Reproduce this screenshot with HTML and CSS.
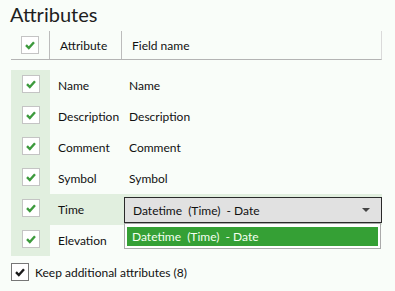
FILE: index.html
```html
<!DOCTYPE html>
<html lang="en">
<head>
    <meta charset="UTF-8">
    <title>Attributes</title>
    <link rel="stylesheet" href="styles.css">
</head>
<body>
    <h1 class="title">Attributes</h1>

    <div class="grid">
        <div class="head">
            <div class="col-check"><span class="box"><svg viewBox="0 0 12 12"><path d="M2 6.2 L4.8 9 L10 3.2" /></svg></span></div>
            <div class="col-attr">Attribute</div>
            <div class="col-field">Field name</div>
        </div>

        <div class="rows">
            <div class="row">
                <div class="col-check"><span class="box"><svg viewBox="0 0 12 12"><path d="M2 6.2 L4.8 9 L10 3.2" /></svg></span></div>
                <div class="col-attr">Name</div>
                <div class="col-field">Name</div>
            </div>
            <div class="row">
                <div class="col-check"><span class="box"><svg viewBox="0 0 12 12"><path d="M2 6.2 L4.8 9 L10 3.2" /></svg></span></div>
                <div class="col-attr">Description</div>
                <div class="col-field">Description</div>
            </div>
            <div class="row">
                <div class="col-check"><span class="box"><svg viewBox="0 0 12 12"><path d="M2 6.2 L4.8 9 L10 3.2" /></svg></span></div>
                <div class="col-attr">Comment</div>
                <div class="col-field">Comment</div>
            </div>
            <div class="row">
                <div class="col-check"><span class="box"><svg viewBox="0 0 12 12"><path d="M2 6.2 L4.8 9 L10 3.2" /></svg></span></div>
                <div class="col-attr">Symbol</div>
                <div class="col-field">Symbol</div>
            </div>
            <div class="row selected">
                <div class="col-check"><span class="box"><svg viewBox="0 0 12 12"><path d="M2 6.2 L4.8 9 L10 3.2" /></svg></span></div>
                <div class="col-attr">Time</div>
                <div class="col-field">
                    <div class="combo">
                        <span>Datetime&nbsp; (Time)&nbsp; - Date</span>
                        <span class="arrow"></span>
                    </div>
                    <div class="dropdown">
                        <div class="option">Datetime&nbsp; (Time)&nbsp; - Date</div>
                    </div>
                </div>
            </div>
            <div class="row">
                <div class="col-check"><span class="box"><svg viewBox="0 0 12 12"><path d="M2 6.2 L4.8 9 L10 3.2" /></svg></span></div>
                <div class="col-attr">Elevation</div>
                <div class="col-field"></div>
            </div>
        </div>
    </div>

    <label class="keep">
        <span class="box dark"><svg viewBox="0 0 12 12"><path d="M2 6.2 L4.8 9 L10 3.2" /></svg></span>
        Keep additional attributes (8)
    </label>
</body>
</html>
```

FILE: styles.css
```css
* {
    margin: 0;
    padding: 0;
    box-sizing: border-box;
}

body {
    background-color: #f9fdf9;
    font-family: Lato, "Noto Sans", sans-serif;
    font-size: 12px;
    color: #111;
    width: 395px;
    height: 291px;
    overflow: hidden;
}

.title {
    font-weight: normal;
    font-size: 20px;
    line-height: 28px;
    height: 31px;
    padding-left: 10px;
    color: #1e1e1e;
}

.grid {
    margin-left: 11px;
    width: 371px;
}

.head {
    display: flex;
    height: 29px;
    border-bottom: 1px solid #b4b4b4;
    border-right: 1px solid #dadada;
}

.head .col-check {
    border-right: 1px solid #bcbcbc;
}

.head .col-attr {
    width: 72px;
    padding-left: 10px;
    border-right: 1px solid #bcbcbc;
}

.head .col-field {
    padding-left: 10px;
}

.head > div {
    display: flex;
    align-items: center;
}

.rows {
    margin-top: 10px;
}

.row {
    display: flex;
    height: 31px;
    align-items: stretch;
}

.row > div {
    display: flex;
    align-items: center;
}

.row.selected {
    background-color: #e1efdf;
}

.col-check {
    width: 39px;
    justify-content: center;
}

.row .col-check {
    background-color: #e1efdf;
    align-items: flex-start !important;
    padding-top: 5px;
}

.row .col-attr {
    width: 71px;
    padding-left: 8px;
}

.row .col-field {
    flex: 1;
    padding-left: 8px;
    position: relative;
}

.box {
    display: inline-flex;
    align-items: center;
    justify-content: center;
    width: 18px;
    height: 18px;
    background: #fff;
    border: 1px solid #c4c4c4;
}

.box svg {
    width: 12px;
    height: 12px;
    fill: none;
    stroke: #3d9a3d;
    stroke-width: 2.4;
}

.box.dark {
    border-color: #767676;
}

.box.dark svg {
    stroke: #1a1a1a;
}

.combo {
    position: absolute;
    left: 3px;
    top: 3px;
    width: 258px;
    height: 26px;
    background: #e1e1e1;
    border: 1px solid #2a2a2a;
    display: flex;
    align-items: center;
    padding-left: 8px;
}

.arrow {
    position: absolute;
    right: 11px;
    top: 10px;
    border-left: 4px solid transparent;
    border-right: 4px solid transparent;
    border-top: 4px solid #444;
}

.dropdown {
    position: absolute;
    left: 3px;
    top: 29px;
    width: 257px;
    height: 26px;
    background: #fff;
    border: 1px solid #aaa;
    padding: 3px 2px 1px 2px;
    z-index: 2;
}

.option {
    background: #35a035;
    color: #f4fff0;
    height: 19px;
    line-height: 19px;
    padding-left: 5px;
}

.keep {
    display: flex;
    align-items: center;
    gap: 6px;
    margin: 7px 0 0 11px;
}
```
